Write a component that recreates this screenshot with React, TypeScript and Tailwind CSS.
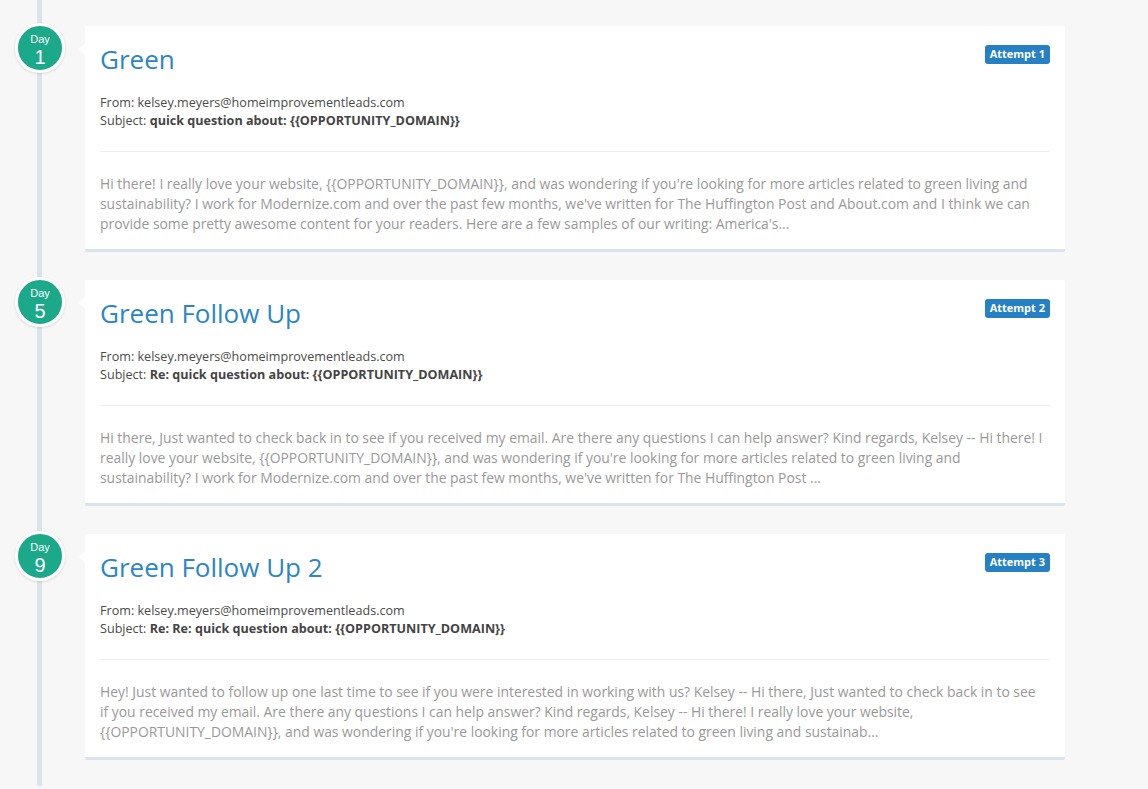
import React from "react";

type Step = {
  day: number;
  title: string;
  attempt: number;
  subject: string;
  body: string;
};

const FROM = "kelsey.meyers@homeimprovementleads.com";

const steps: Step[] = [
  {
    day: 1,
    title: "Green",
    attempt: 1,
    subject: "quick question about: {{OPPORTUNITY_DOMAIN}}",
    body:
      "Hi there! I really love your website, {{OPPORTUNITY_DOMAIN}}, and was wondering if you're looking for more articles related to green living and sustainability? I work for Modernize.com and over the past few months, we've written for The Huffington Post and About.com and I think we can provide some pretty awesome content for your readers. Here are a few samples of our writing: America's...",
  },
  {
    day: 5,
    title: "Green Follow Up",
    attempt: 2,
    subject: "Re: quick question about: {{OPPORTUNITY_DOMAIN}}",
    body:
      "Hi there, Just wanted to check back in to see if you received my email. Are there any questions I can help answer? Kind regards, Kelsey -- Hi there! I really love your website, {{OPPORTUNITY_DOMAIN}}, and was wondering if you're looking for more articles related to green living and sustainability? I work for Modernize.com and over the past few months, we've written for The Huffington Post ...",
  },
  {
    day: 9,
    title: "Green Follow Up 2",
    attempt: 3,
    subject: "Re: Re: quick question about: {{OPPORTUNITY_DOMAIN}}",
    body:
      "Hey! Just wanted to follow up one last time to see if you were interested in working with us? Kelsey -- Hi there, Just wanted to check back in to see if you received my email. Are there any questions I can help answer? Kind regards, Kelsey -- Hi there! I really love your website, {{OPPORTUNITY_DOMAIN}}, and was wondering if you're looking for more articles related to green living and sustainab...",
  },
];

function DayBadge({ day }: { day: number }) {
  return (
    <div
      className="ml-[15px] -mt-[3px] w-[50px] h-[50px] rounded-full bg-[#1ba98a] border-[3px] border-white shadow-[0_1px_3px_rgba(0,0,0,0.12)] flex flex-col items-center pt-[7px] text-white"
      style={{ fontFamily: '"Liberation Sans", Arial, sans-serif' }}
    >
      <span className="text-[11px] leading-[12px]">Day</span>
      <span className="mt-[2px] text-[20px] leading-[20px]">{day}</span>
    </div>
  );
}

function StepCard({ step }: { step: Step }) {
  return (
    <div className="relative w-[980px] bg-white rounded-[2px] border-b-[3px] border-[#dbe4eb] px-[15px] pt-[17px] pb-[15px]">
      {/* little pointer towards the day circle */}
      <div className="absolute -left-[6px] top-[17px] w-0 h-0 border-y-[6px] border-y-transparent border-r-[6px] border-r-white" />
      <div className="flex items-start justify-between">
        <h2 className="text-[26px] leading-[32px] text-[#2a86c6] font-normal">{step.title}</h2>
        <span className="mt-[2px] h-[19px] flex items-center rounded-[3px] bg-[#2581c4] px-[5px] text-[11px] font-bold text-white">
          Attempt {step.attempt}
        </span>
      </div>
      <div className="mt-[19px] text-[12.6px] leading-[18px] text-[#4a4a4a]">
        <p>From: {FROM}</p>
        <p>
          Subject: <span className="font-bold text-[#444]">{step.subject}</span>
        </p>
      </div>
      <div className="mt-[21px] border-t border-[#eeeeee]" />
      <p className="mt-[22px] pr-[5px] text-[13.9px] leading-[20px] text-[#999]">{step.body}</p>
    </div>
  );
}

export default function App() {
  return (
    <div
      className="relative min-h-[789px] w-full bg-[#f7f7f7] pt-[26px]"
      style={{ fontFamily: '"Open Sans", "Liberation Sans", sans-serif' }}
    >
      {/* timeline rail */}
      <div className="absolute left-[37px] top-0 h-[786px] w-[5px] bg-[#dae4ec]" />
      <div className="relative flex flex-col gap-[28px]">
        {steps.map((s) => (
          <div key={s.day} className="flex">
            <div className="w-[85px] shrink-0">
              <DayBadge day={s.day} />
            </div>
            <StepCard step={s} />
          </div>
        ))}
      </div>
    </div>
  );
}
